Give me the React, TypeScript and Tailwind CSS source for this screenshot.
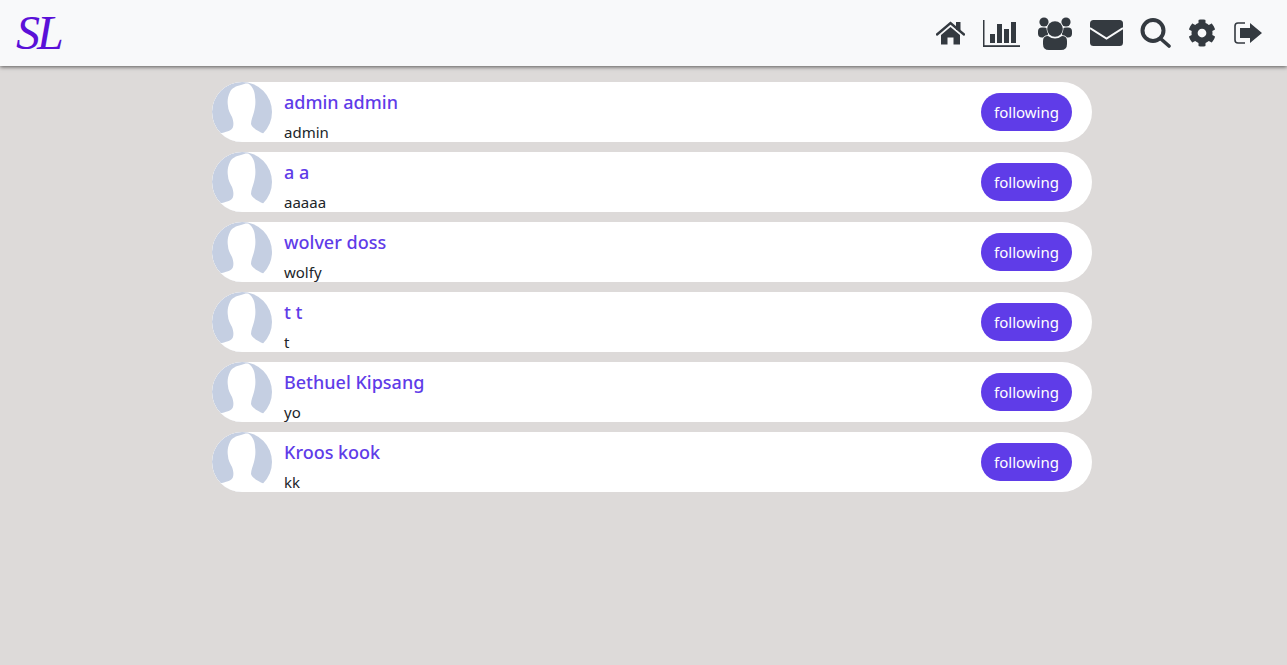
import { FaCog } from "react-icons/fa";

const people = [
  ["admin admin", "admin"],
  ["a a", "aaaaa"],
  ["wolver doss", "wolfy"],
  ["t t", "t"],
  ["Bethuel Kipsang", "yo"],
  ["Kroos kook", "kk"],
];

function Avatar() {
  return (
    <svg width="60" height="60" viewBox="0 0 60 60" className="shrink-0">
      <circle cx="30" cy="30" r="30" fill="#c5cfe2" />
      <path d="M37 2C40 4 43 9 43 15C44 21 43 26 42 30C41 34 39 38 39 42C40 46 46 49 51.5 51.5V60H8V51.5C13 50 20 49 21 45C22 41 21 38 20 35C18 31 16 28 16 24C15 19 16 14 18 10C20 6 24 4 29 3C32 2 35 1 37 2Z" fill="#ffffff" />
    </svg>
  );
}

function HomeIcon() {
  return (
    <svg width="29" height="24" viewBox="0 0 29 24" fill="#343a40">
      <rect x="20" y="1" width="4.5" height="8" />
      <path d="M1 13.5L14.5 2L28 13.5" fill="none" stroke="#343a40" strokeWidth="2.4" strokeLinecap="round" />
      <path d="M5 14L14.5 6L24 14V23.5H17.5V16.5H11.5V23.5H5Z" />
    </svg>
  );
}

function ChartIcon() {
  return (
    <svg width="37" height="27" viewBox="0 0 37 27" fill="#343a40">
      <rect x="0" y="0" width="1.5" height="27" />
      <rect x="0" y="25.2" width="37" height="1.8" />
      <rect x="7" y="14" width="5" height="9" />
      <rect x="14" y="4" width="5" height="19" />
      <rect x="21" y="9" width="5" height="14" />
      <rect x="28" y="2" width="5" height="21" />
    </svg>
  );
}

function UsersIcon() {
  return (
    <svg width="36" height="34" viewBox="0 0 36 34" fill="#343a40">
      <circle cx="7" cy="6" r="4.6" />
      <circle cx="29" cy="6" r="4.6" />
      <rect x="1" y="11.5" width="10" height="10" rx="4" />
      <rect x="25" y="11.5" width="10" height="10" rx="4" />
      <g stroke="#f8f9fa" strokeWidth="1.3" paintOrder="stroke">
        <circle cx="18" cy="13" r="7.8" />
        <path d="M6 25Q6 20 11 20Q18 25 25 20Q30 20 30 25V28Q30 34 24 34H12Q6 34 6 28Z" />
      </g>
    </svg>
  );
}

function MailIcon() {
  return (
    <svg width="33" height="26" viewBox="0 0 33 26">
      <rect width="33" height="26" rx="3.5" fill="#343a40" />
      <path d="M0 8L16.5 18.5L33 8" fill="none" stroke="#f8f9fa" strokeWidth="2" />
    </svg>
  );
}

function SearchIcon() {
  return (
    <svg width="31" height="30" viewBox="0 0 31 30" fill="none" stroke="#343a40">
      <circle cx="13" cy="12.5" r="10.5" strokeWidth="4" />
      <path d="M21 21L29 28" strokeWidth="3.6" strokeLinecap="round" />
    </svg>
  );
}

function SignOutIcon() {
  return (
    <svg width="28" height="22" viewBox="0 0 28 22">
      <path d="M11 1H4Q1 1 1 4V18Q1 21 4 21H11" fill="none" stroke="#343a40" strokeWidth="1.6" />
      <path d="M6 6H16V1L28 11L16 21V16H6Z" fill="#343a40" />
    </svg>
  );
}

export default function App() {
  return (
    <div className="min-h-[665px] bg-[#dddad9] font-['Noto_Sans',sans-serif]">
      <nav className="flex h-[66px] items-center justify-between bg-[#f8f9fa] pl-4 pr-[25px] shadow-[0_1px_4px_rgba(0,0,0,0.6)]">
        <span className="font-['Liberation_Serif',serif] text-[48px] italic leading-none tracking-[-3px] text-[#5a10d8]">SL</span>
        <div className="flex items-center gap-[17px] text-[#343a40]">
          <HomeIcon />
          <span className="ml-px"><ChartIcon /></span>
          <UsersIcon />
          <MailIcon />
          <SearchIcon />
          <FaCog size={28} />
          <span className="ml-px"><SignOutIcon /></span>
        </div>
      </nav>
      <main className="ml-[212px] flex w-[880px] flex-col gap-2.5 pt-4">
        {people.map(([name, handle], i) => (
          <div key={i} className="flex h-[60px] items-center overflow-hidden rounded-[30px] bg-white pr-5">
            <Avatar />
            <div className="ml-3 flex h-full flex-1 flex-col">
              <div className="pt-[7px] text-[18px] font-medium leading-[26px] text-[#5f3ce8]">{name}</div>
              <div className="mt-auto text-[15px] leading-[20px] text-[#212529]">{handle}</div>
            </div>
            <button className="flex h-[38px] w-[91px] items-center justify-center rounded-[19px] bg-[#5f3ce8] text-[15px] text-white">following</button>
          </div>
        ))}
      </main>
    </div>
  );
}
